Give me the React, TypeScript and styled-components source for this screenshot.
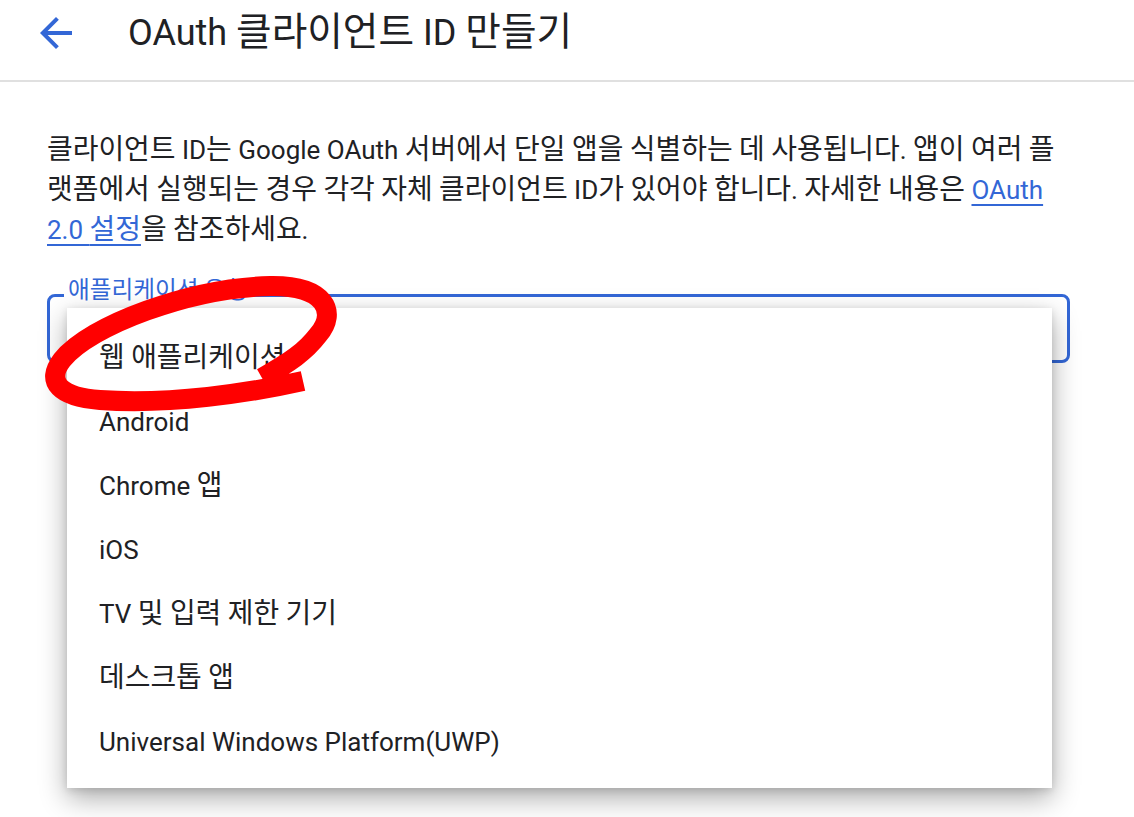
import React from "react";
import styled, { createGlobalStyle } from "styled-components";

const GlobalStyle = createGlobalStyle`
  html, body {
    margin: 0;
    padding: 0;
    background: #ffffff;
  }
  body {
    font-family: Roboto, "Noto Sans CJK KR", "Noto Sans", sans-serif;
    color: #202124;
  }
`;

const palette = {
  blue: "#3367d6",
  text: "#202124",
  divider: "#e0e0e0",
};

const Page = styled.div`
  position: relative;
  width: 1134px;
  min-height: 817px;
  overflow: hidden;
`;

// hangul glyphs come out a little wider/taller in the original than in Noto CJK
const Hangul = styled.span`
  font-size: 1.075em;
  line-height: 1;
`;

const withHangul = (text: string) =>
  text.split(/([\uac00-\ud7a3\u3131-\u318e]+)/).map((part, i) =>
    i % 2 === 1 ? <Hangul key={i}>{part}</Hangul> : part
  );

const Header = styled.header`
  display: flex;
  align-items: center;
  height: 82px;
  padding: 0 0 14px 32px;
  box-sizing: border-box;
  border-bottom: 2px solid ${palette.divider};
`;

const BackButton = styled.button`
  display: flex;
  align-items: center;
  justify-content: center;
  width: 48px;
  height: 48px;
  padding: 0;
  border: none;
  background: transparent;
  cursor: pointer;
  color: ${palette.blue};
`;

const Title = styled.h1`
  margin: 0 0 0 48px;
  font-size: 36px;
  font-weight: 400;
  line-height: 44px;
  color: ${palette.text};
`;

const Description = styled.p`
  width: 1020px;
  margin: 48px 0 0 47px;
  font-size: 26px;
  line-height: 40px;
  color: ${palette.text};

  a {
    color: ${palette.blue};
    text-decoration: underline;
    text-decoration-thickness: 2px;
    text-underline-offset: 5px;
  }
`;

const Field = styled.div`
  position: relative;
  width: 1023px;
  height: 69px;
  margin: 44px 0 0 47px;
  box-sizing: border-box;
  border: 3px solid ${palette.blue};
  border-radius: 8px;
`;

const FieldLabel = styled.span`
  position: absolute;
  top: -19px;
  left: 14px;
  padding: 0 4px;
  background: #ffffff;
  font-size: 22px;
  line-height: 26px;
  color: ${palette.blue};
`;

const Menu = styled.ul`
  position: absolute;
  top: 11px;
  left: 17px;
  z-index: 2;
  width: 985px;
  margin: 0;
  padding: 16px 0;
  list-style: none;
  background: #ffffff;
  box-shadow: 0 10px 26px rgba(0, 0, 0, 0.33), 0 2px 8px rgba(0, 0, 0, 0.12);
`;

const MenuItem = styled.li`
  display: flex;
  align-items: center;
  height: 64px;
  padding: 4px 0 0 32px;
  box-sizing: border-box;
  font-size: 26px;
  color: ${palette.text};
  cursor: pointer;
`;

const ItemText = styled.span`
  white-space: nowrap;
`;

const Annotation = styled.svg`
  position: absolute;
  top: 0;
  left: 0;
  z-index: 5;
  pointer-events: none;
`;

const options = [
  "웹 애플리케이션",
  "Android",
  "Chrome 앱",
  "iOS",
  "TV 및 입력 제한 기기",
  "데스크톱 앱",
  "Universal Windows Platform(UWP)",
];

const App: React.FC = () => {
  return (
    <>
      <GlobalStyle />
      <Page>
        <Header>
          <BackButton aria-label="뒤로">
            <svg width="48" height="48" viewBox="0 0 24 24" fill="currentColor">
              <path d="M20 11H7.83l5.59-5.59L12 4l-8 8 8 8 1.41-1.41L7.83 13H20v-2z" />
            </svg>
          </BackButton>
          <Title>{withHangul("OAuth 클라이언트 ID 만들기")}</Title>
        </Header>
        <Description>
          {withHangul(
            "클라이언트 ID는 Google OAuth 서버에서 단일 앱을 식별하는 데 사용됩니다. 앱이 여러 플랫폼에서 실행되는 경우 각각 자체 클라이언트 ID가 있어야 합니다. 자세한 내용은 "
          )}
          <a href="#oauth">{withHangul("OAuth 2.0 설정")}</a>
          {withHangul("을 참조하세요.")}
        </Description>
        <Field>
          <FieldLabel>{withHangul("애플리케이션 유형")}</FieldLabel>
          <Menu>
            {options.map((option) => (
              <MenuItem key={option}>
                <ItemText>{withHangul(option)}</ItemText>
              </MenuItem>
            ))}
          </Menu>
        </Field>
        <Annotation width="1134" height="817" viewBox="0 0 1134 817">
          <path
            d="M303 381 C 250 393, 170 405, 100 400 C 60 397, 45 382, 62 360 C 90 325, 190 288, 270 286 C 325 285, 338 312, 318 335 C 305 352, 290 362, 262 378"
            fill="none"
            stroke="#ff0000"
            strokeWidth="20"
          />
        </Annotation>
      </Page>
    </>
  );
};

export default App;
